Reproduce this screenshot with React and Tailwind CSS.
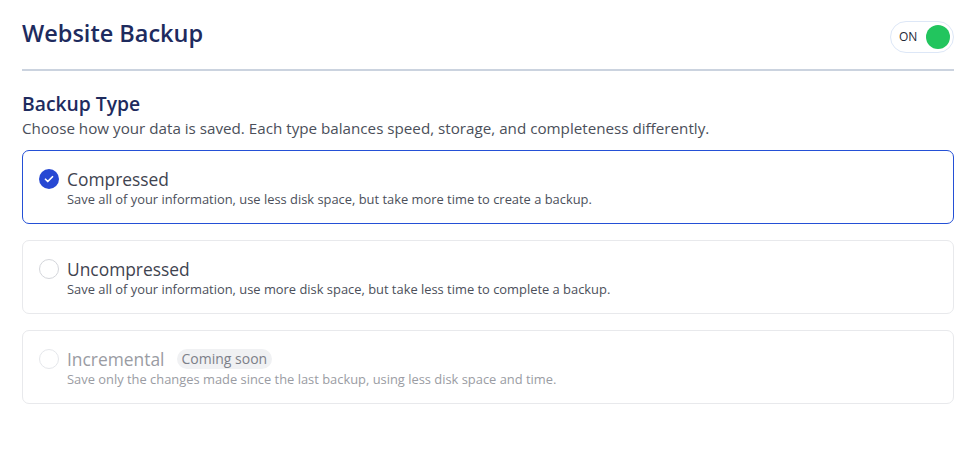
import React from "react";

function Check() {
  return (
    <span className="flex h-[20px] w-[20px] shrink-0 items-center justify-center rounded-full bg-[#2748d3]">
      <svg width="12" height="12" viewBox="0 0 24 24" fill="none" stroke="white" strokeWidth="3.5" strokeLinecap="round" strokeLinejoin="round">
        <path d="M5 12.5l4.5 4.5L19 7.5" />
      </svg>
    </span>
  );
}

function Radio({ disabled }) {
  return (
    <span className={"block h-[20px] w-[20px] shrink-0 rounded-full border-[1.5px] " + (disabled ? "border-[#e5e7eb]" : "border-[#d4d6db]")} />
  );
}

function Option({ title, desc, selected, disabled, badge }) {
  return (
    <div
      className={
        "flex h-[74px] items-start gap-[8px] rounded-[7px] border pl-[16px] pt-[17px] " +
        (selected ? "border-[#2450d6]" : "border-[#e8e9ec]")
      }
    >
      <div className="pt-[1px]">{selected ? <Check /> : <Radio disabled={disabled} />}</div>
      <div className="flex flex-col">
        <div className="flex items-center gap-[12px]">
          <span className={"text-[17.4px] leading-[22px] " + (disabled ? "text-[#9a9ca3]" : "text-[#3f4450]")}>{title}</span>
          {badge && (
            <span className="rounded-full bg-[#f0f1f3] px-[5px] text-[14px] leading-[20px] text-[#7d8089]">{badge}</span>
          )}
        </div>
        <span className={"text-[12.9px] leading-[18px] " + (disabled ? "text-[#9a9ca3]" : "text-[#4b4f5a]")}>{desc}</span>
      </div>
    </div>
  );
}

export default function App() {
  return (
    <div className="h-[453px] w-[973px] bg-white pl-[22px] pr-[19px] pt-[19px]" style={{ fontFamily: '"Open Sans", sans-serif' }}>
      <div className="flex items-start justify-between">
        <h1 className="text-[23.5px] font-semibold leading-[28px] text-[#1e2b5e]">Website Backup</h1>
        <div className="mt-[2px] flex h-[32px] w-[64px] items-center justify-between rounded-full border border-[#dde7f7] pl-[8px] pr-[3px]">
          <span className="text-[12px] text-[#1f2937]">ON</span>
          <span className="h-[24px] w-[24px] rounded-full bg-[#22c55e]" />
        </div>
      </div>
      <div className="mt-[16px] h-[2px] w-full bg-[#cbd3df]" />
      <h2 className="mt-[21px] text-[19.3px] font-semibold leading-[24px] text-[#1e2b5e]">Backup Type</h2>
      <p className="mt-[2px] text-[15.2px] leading-[20px] text-[#4b4f5a]">
        Choose how your data is saved. Each type balances speed, storage, and completeness differently.
      </p>
      <div className="mt-[12px] flex flex-col gap-[16px]">
        <Option selected title="Compressed" desc="Save all of your information, use less disk space, but take more time to create a backup." />
        <Option title="Uncompressed" desc="Save all of your information, use more disk space, but take less time to complete a backup." />
        <Option disabled title="Incremental" badge="Coming soon" desc="Save only the changes made since the last backup, using less disk space and time." />
      </div>
    </div>
  );
}
